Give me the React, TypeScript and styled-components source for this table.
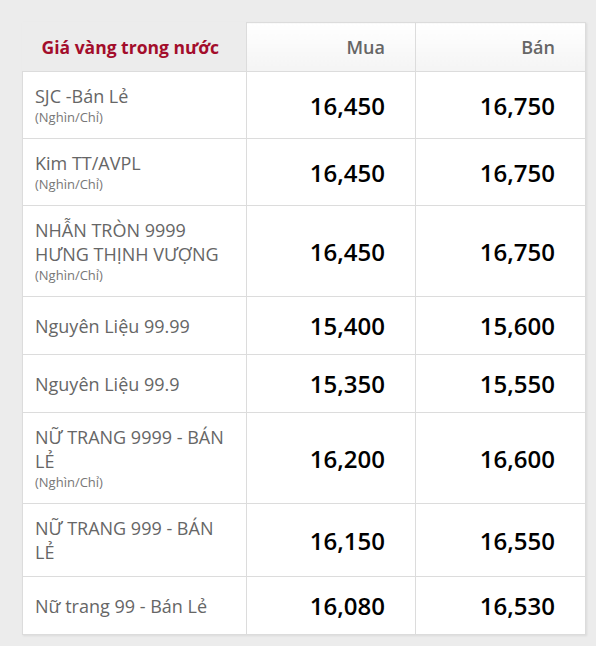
import * as React from "react"
import styled, { createGlobalStyle } from "styled-components"

type PriceRow = {
  name: string
  unit?: boolean
  buy: string
  sell: string
}

const rows: PriceRow[] = [
  { name: "SJC -Bán Lẻ", unit: true, buy: "16,450", sell: "16,750" },
  { name: "Kim TT/AVPL", unit: true, buy: "16,450", sell: "16,750" },
  { name: "NHẪN TRÒN 9999 HƯNG THỊNH VƯỢNG", unit: true, buy: "16,450", sell: "16,750" },
  { name: "Nguyên Liệu 99.99", buy: "15,400", sell: "15,600" },
  { name: "Nguyên Liệu 99.9", buy: "15,350", sell: "15,550" },
  { name: "NỮ TRANG 9999 - BÁN LẺ", unit: true, buy: "16,200", sell: "16,600" },
  { name: "NỮ TRANG 999 - BÁN LẺ", buy: "16,150", sell: "16,550" },
  { name: "Nữ trang 99 - Bán Lẻ", buy: "16,080", sell: "16,530" },
]

export default function App() {
  return (
    <>
      <GlobalStyle />
      <Page>
        <PriceTable>
          <colgroup>
            <col style={{ width: 224 }} />
            <col style={{ width: 169 }} />
            <col style={{ width: 170 }} />
          </colgroup>
          <thead>
            <tr>
              <TitleCell>Giá vàng trong nước</TitleCell>
              <HeadCell>Mua</HeadCell>
              <HeadCell>Bán</HeadCell>
            </tr>
          </thead>
          <tbody>
            {rows.map((row) => (
              <tr key={row.name}>
                <NameCell>
                  <Name>{row.name}</Name>
                  {row.unit && <Unit>(Nghìn/Chỉ)</Unit>}
                </NameCell>
                <PriceCell>{row.buy}</PriceCell>
                <PriceCell>{row.sell}</PriceCell>
              </tr>
            ))}
          </tbody>
        </PriceTable>
      </Page>
    </>
  )
}

const GlobalStyle = createGlobalStyle`
  body {
    margin: 0;
    background: #ececec;
    font-family: "Open Sans", "Liberation Sans", sans-serif;
  }
`

const Page = styled.div`
  padding: 22px 0 0 22px;
  width: 596px;
  height: 646px;
  box-sizing: border-box;
  overflow: hidden;
`

const PriceTable = styled.table`
  width: 564px;
  border-collapse: collapse;
  table-layout: fixed;
  box-shadow: 1px 1px 2px rgba(0, 0, 0, 0.08);
`

const TitleCell = styled.th`
  background: #ececec;
  padding: 12px 10px 12px 19px;
  text-align: left;
  font-size: 17.5px;
  line-height: 24px;
  font-weight: 700;
  color: #a30d2b;
  border-bottom: 1px solid #dcdcdc;
`

const HeadCell = styled.th`
  background: linear-gradient(#ffffff, #f4f4f4);
  border: 1px solid #dcdcdc;
  padding: 12px 30px 12px 10px;
  text-align: right;
  font-size: 18px;
  line-height: 24px;
  font-weight: 600;
  color: #666;
`

const NameCell = styled.td`
  background: #fff;
  border: 1px solid #dcdcdc;
  padding: 12px 12px;
  vertical-align: middle;
`

const Name = styled.div`
  font-size: 18px;
  line-height: 24px;
  color: #666;
`

const Unit = styled.div`
  font-size: 13px;
  line-height: 18px;
  color: #777;
`

const PriceCell = styled.td`
  background: #fff;
  border: 1px solid #dcdcdc;
  padding: 12px 30px 12px 10px;
  text-align: right;
  vertical-align: middle;
  font-size: 24px;
  line-height: 33px;
  font-weight: 600;
  color: #000;
`
